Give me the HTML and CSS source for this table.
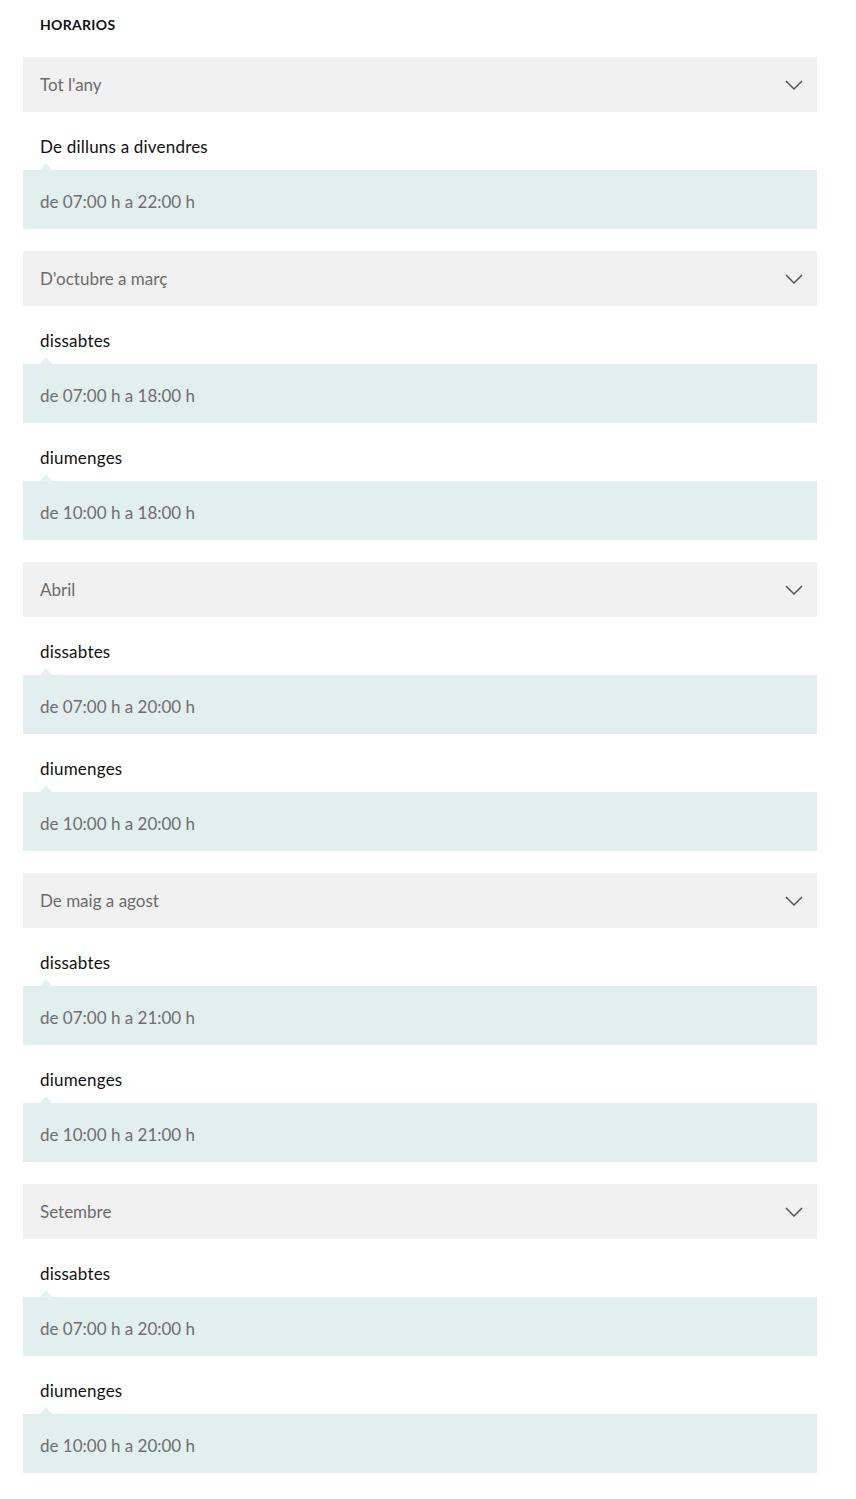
FILE: index.html
```html
<!DOCTYPE html>
<html lang="ca">
<head>
<meta charset="utf-8">
<link rel="stylesheet" href="styles.css">
</head>
<body>
<div class="schedule">
  <h2 class="title">HORARIOS</h2>

  <section class="period">
    <div class="period-head"><span>Tot l'any</span><svg class="chev" width="18" height="10" viewBox="0 0 18 10"><path d="M1 1 L9 9 L17 1" fill="none" stroke="#555" stroke-width="1.5"/></svg></div>
    <div class="day-name">De dilluns a divendres</div>
    <div class="day-hours">de 07:00 h a 22:00 h</div>
  </section>

  <section class="period">
    <div class="period-head"><span>D'octubre a març</span><svg class="chev" width="18" height="10" viewBox="0 0 18 10"><path d="M1 1 L9 9 L17 1" fill="none" stroke="#555" stroke-width="1.5"/></svg></div>
    <div class="day-name">dissabtes</div>
    <div class="day-hours">de 07:00 h a 18:00 h</div>
    <div class="day-name">diumenges</div>
    <div class="day-hours">de 10:00 h a 18:00 h</div>
  </section>

  <section class="period">
    <div class="period-head"><span>Abril</span><svg class="chev" width="18" height="10" viewBox="0 0 18 10"><path d="M1 1 L9 9 L17 1" fill="none" stroke="#555" stroke-width="1.5"/></svg></div>
    <div class="day-name">dissabtes</div>
    <div class="day-hours">de 07:00 h a 20:00 h</div>
    <div class="day-name">diumenges</div>
    <div class="day-hours">de 10:00 h a 20:00 h</div>
  </section>

  <section class="period">
    <div class="period-head"><span>De maig a agost</span><svg class="chev" width="18" height="10" viewBox="0 0 18 10"><path d="M1 1 L9 9 L17 1" fill="none" stroke="#555" stroke-width="1.5"/></svg></div>
    <div class="day-name">dissabtes</div>
    <div class="day-hours">de 07:00 h a 21:00 h</div>
    <div class="day-name">diumenges</div>
    <div class="day-hours">de 10:00 h a 21:00 h</div>
  </section>

  <section class="period">
    <div class="period-head"><span>Setembre</span><svg class="chev" width="18" height="10" viewBox="0 0 18 10"><path d="M1 1 L9 9 L17 1" fill="none" stroke="#555" stroke-width="1.5"/></svg></div>
    <div class="day-name">dissabtes</div>
    <div class="day-hours">de 07:00 h a 20:00 h</div>
    <div class="day-name">diumenges</div>
    <div class="day-hours">de 10:00 h a 20:00 h</div>
  </section>
</div>
</body>
</html>
```

FILE: styles.css
```css
* { box-sizing: border-box; }
html, body { margin: 0; padding: 0; background: #fff; }
body {
  font-family: "Lato", "Open Sans", sans-serif;
  color: #111;
}
.schedule {
  width: 794px;
  margin-left: 23px;
}
.title {
  margin: 0;
  padding: 15px 17px 0;
  height: 57px;
  font-size: 14px;
  line-height: 20px;
  font-weight: 700;
  letter-spacing: 0.3px;
  color: #111;
}
.period {
  margin-bottom: 22px;
}
.period-head {
  height: 55px;
  background: #f1f1f1;
  display: flex;
  align-items: center;
  justify-content: space-between;
  padding: 0 14px 0 17px;
  font-size: 17px;
  color: #6b6b6b;
}
.chev { display: block; }
.day-name {
  padding: 23px 17px 11px;
  font-size: 17px;
  line-height: 24px;
  letter-spacing: 0.2px;
  color: #111;
}
.day-hours {
  position: relative;
  height: 59px;
  background: #e1efef;
  display: flex;
  align-items: center;
  padding: 3px 0 0 17px;
  font-size: 17px;
  color: #6e6e6e;
}
.day-hours::before {
  content: "";
  position: absolute;
  left: 17px;
  top: -7px;
  border-left: 6px solid transparent;
  border-right: 6px solid transparent;
  border-bottom: 7px solid #e5f1f1;
}
```
